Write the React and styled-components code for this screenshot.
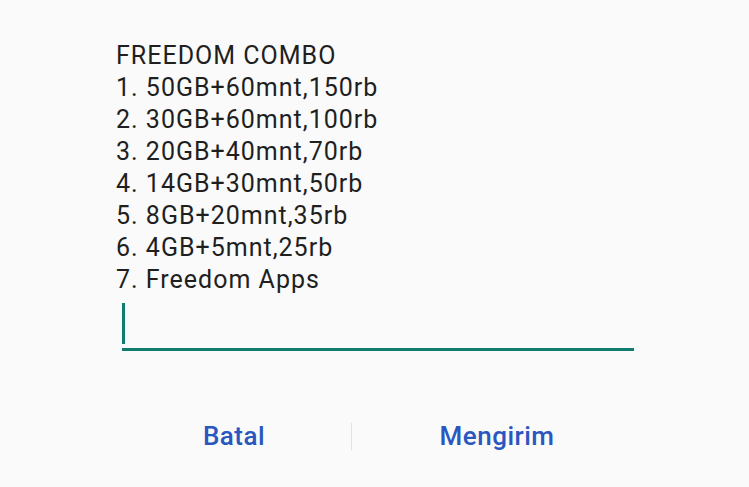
import React from 'react';
import styled, { createGlobalStyle } from 'styled-components';

const GlobalStyle = createGlobalStyle`
  html, body {
    margin: 0;
    padding: 0;
    background: #fafafa;
  }
  body {
    font-family: Roboto, "Noto Sans", sans-serif;
  }
`;

const Dialog = styled.div`
  width: 749px;
  height: 487px;
  box-sizing: border-box;
  background: #fafafa;
  display: flex;
  flex-direction: column;
  padding: 40px 0 0 116px;
`;

const Message = styled.div`
  font-size: 25px;
  line-height: 32px;
  letter-spacing: 1px;
  color: #1f1f1f;
  white-space: pre-line;
`;

const InputWrap = styled.div`
  width: 512px;
  height: 45px;
  margin: 7px 0 0 6px;
  border-bottom: 3px solid #0e7d6d;
  display: flex;
  align-items: flex-start;
`;

const Caret = styled.div`
  width: 3px;
  height: 41px;
  background: #0e7d6d;
`;

const Actions = styled.div`
  display: flex;
  align-items: center;
  margin: 70px 0 0 -116px;
  height: 30px;
`;

const Action = styled.button`
  flex: ${p => p.$flex};
  border: none;
  background: none;
  padding: 0 0 0 ${p => p.$indent || 0}px;
  font-family: Roboto, sans-serif;
  font-weight: 500;
  font-size: 26px;
  letter-spacing: 0.5px;
  color: #2a56c0;
  text-align: center;
`;

const Divider = styled.div`
  width: 1px;
  height: 27px;
  background: #e2e2e2;
`;

const lines = [
  'FREEDOM COMBO',
  '1. 50GB+60mnt,150rb',
  '2. 30GB+60mnt,100rb',
  '3. 20GB+40mnt,70rb',
  '4. 14GB+30mnt,50rb',
  '5. 8GB+20mnt,35rb',
  '6. 4GB+5mnt,25rb',
  '7. Freedom Apps',
];

export default function App() {
  return (
    <>
      <GlobalStyle />
      <Dialog>
        <Message>{lines.join('\n')}</Message>
        <InputWrap>
          <Caret />
        </InputWrap>
        <Actions>
          <Action $flex="0 0 351px" $indent={117}>Batal</Action>
          <Divider />
          <Action $flex="0 0 290px">Mengirim</Action>
        </Actions>
      </Dialog>
    </>
  );
}
